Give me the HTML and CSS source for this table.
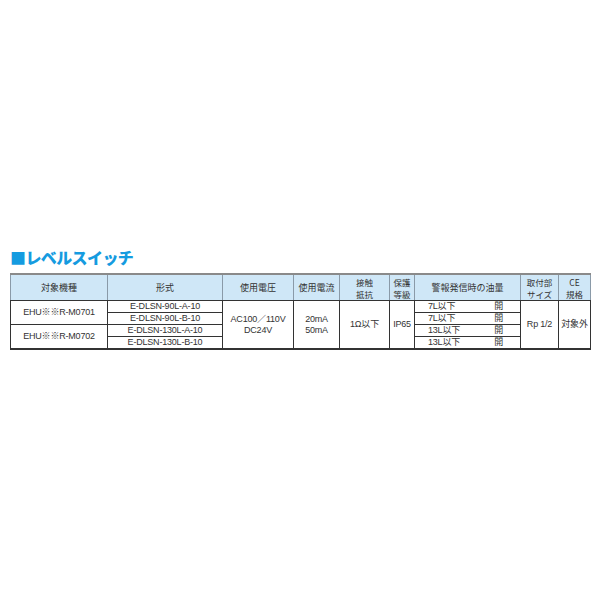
FILE: index.html
```html
<!DOCTYPE html>
<html lang="ja">
<head>
<meta charset="utf-8">
<link rel="stylesheet" href="styles.css">
</head>
<body>
<div class="page">
  <h2 class="title">■レベルスイッチ</h2>
  <table class="spec">
    <colgroup>
      <col class="c1"><col class="c2"><col class="c3"><col class="c4"><col class="c5"><col class="c6"><col class="c7"><col class="c8"><col class="c9">
    </colgroup>
    <thead>
      <tr>
        <th>対象機種</th>
        <th>形式</th>
        <th>使用電圧</th>
        <th>使用電流</th>
        <th class="two"><span>接触</span><span>抵抗</span></th>
        <th class="two"><span>保護</span><span>等級</span></th>
        <th>警報発信時の油量</th>
        <th class="two"><span>取付部</span><span>サイズ</span></th>
        <th class="two"><span>CE</span><span>規格</span></th>
      </tr>
    </thead>
    <tbody>
      <tr>
        <td rowspan="2">EHU※※R-M0701</td>
        <td class="model">E-DLSN-90L-A-10</td>
        <td rowspan="4" class="multi"><span>AC100／110V</span><span>DC24V</span></td>
        <td rowspan="4" class="multi"><span>20mA</span><span>50mA</span></td>
        <td rowspan="4">1Ω以下</td>
        <td rowspan="4">IP65</td>
        <td class="oil"><div class="oilrow"><span>7L以下</span><span>開</span></div></td>
        <td rowspan="4">Rp 1/2</td>
        <td rowspan="4">対象外</td>
      </tr>
      <tr>
        <td class="model">E-DLSN-90L-B-10</td>
        <td class="oil"><div class="oilrow"><span>7L以下</span><span>開</span></div></td>
      </tr>
      <tr>
        <td rowspan="2">EHU※※R-M0702</td>
        <td class="model">E-DLSN-130L-A-10</td>
        <td class="oil"><div class="oilrow"><span>13L以下</span><span>開</span></div></td>
      </tr>
      <tr>
        <td class="model">E-DLSN-130L-B-10</td>
        <td class="oil"><div class="oilrow"><span>13L以下</span><span>開</span></div></td>
      </tr>
    </tbody>
  </table>
</div>
</body>
</html>
```
FILE: styles.css
```css
html, body {
  margin: 0;
  padding: 0;
  background: #ffffff;
}

.page {
  padding: 247px 10px 0 10px;
  font-family: "Liberation Sans", "Noto Sans CJK JP", sans-serif;
  color: #333333;
}

.title {
  margin: 0 0 6px 0;
  font-family: "Noto Sans CJK JP", sans-serif;
  font-size: 16px;
  line-height: 20px;
  font-weight: 900;
  color: #159be0;
  letter-spacing: -0.6px;
}

.spec {
  border-collapse: collapse;
  table-layout: fixed;
  width: 580px;
  font-size: 9px;
  border-top: 2px solid #8a8a8a;
  border-bottom: 2px solid #333333;
}

.c1 { width: 97px; }
.c2 { width: 115px; }
.c3 { width: 71px; }
.c4 { width: 46px; }
.c5 { width: 50px; }
.c6 { width: 25px; }
.c7 { width: 106px; }
.c8 { width: 38px; }
.c9 { width: 32px; }

.spec th {
  background: #cfe7f7;
  font-weight: normal;
  font-size: 9px;
  line-height: 12px;
  height: 25px;
  padding: 0;
  text-align: center;
  vertical-align: middle;
  color: #333333;
  border-left: 1px solid #8a9aa8;
  border-right: 1px solid #8a9aa8;
  border-bottom: 1px solid #333333;
  font-family: "Noto Sans CJK JP", sans-serif;
}

.spec th.two span {
  display: block;
  height: 12px;
  line-height: 12px;
  font-size: 8.5px;
  overflow: hidden;
}

.spec td {
  height: 11px;
  padding: 0;
  line-height: 11px;
  text-align: center;
  vertical-align: middle;
  border: 1px solid #333333;
  letter-spacing: -0.2px;
  white-space: nowrap;
  overflow: hidden;
}

.spec td.multi span {
  display: block;
  height: 11px;
  line-height: 11px;
}

.oilrow {
  display: flex;
  justify-content: space-between;
  padding: 0 17px 0 13px;
}
```
